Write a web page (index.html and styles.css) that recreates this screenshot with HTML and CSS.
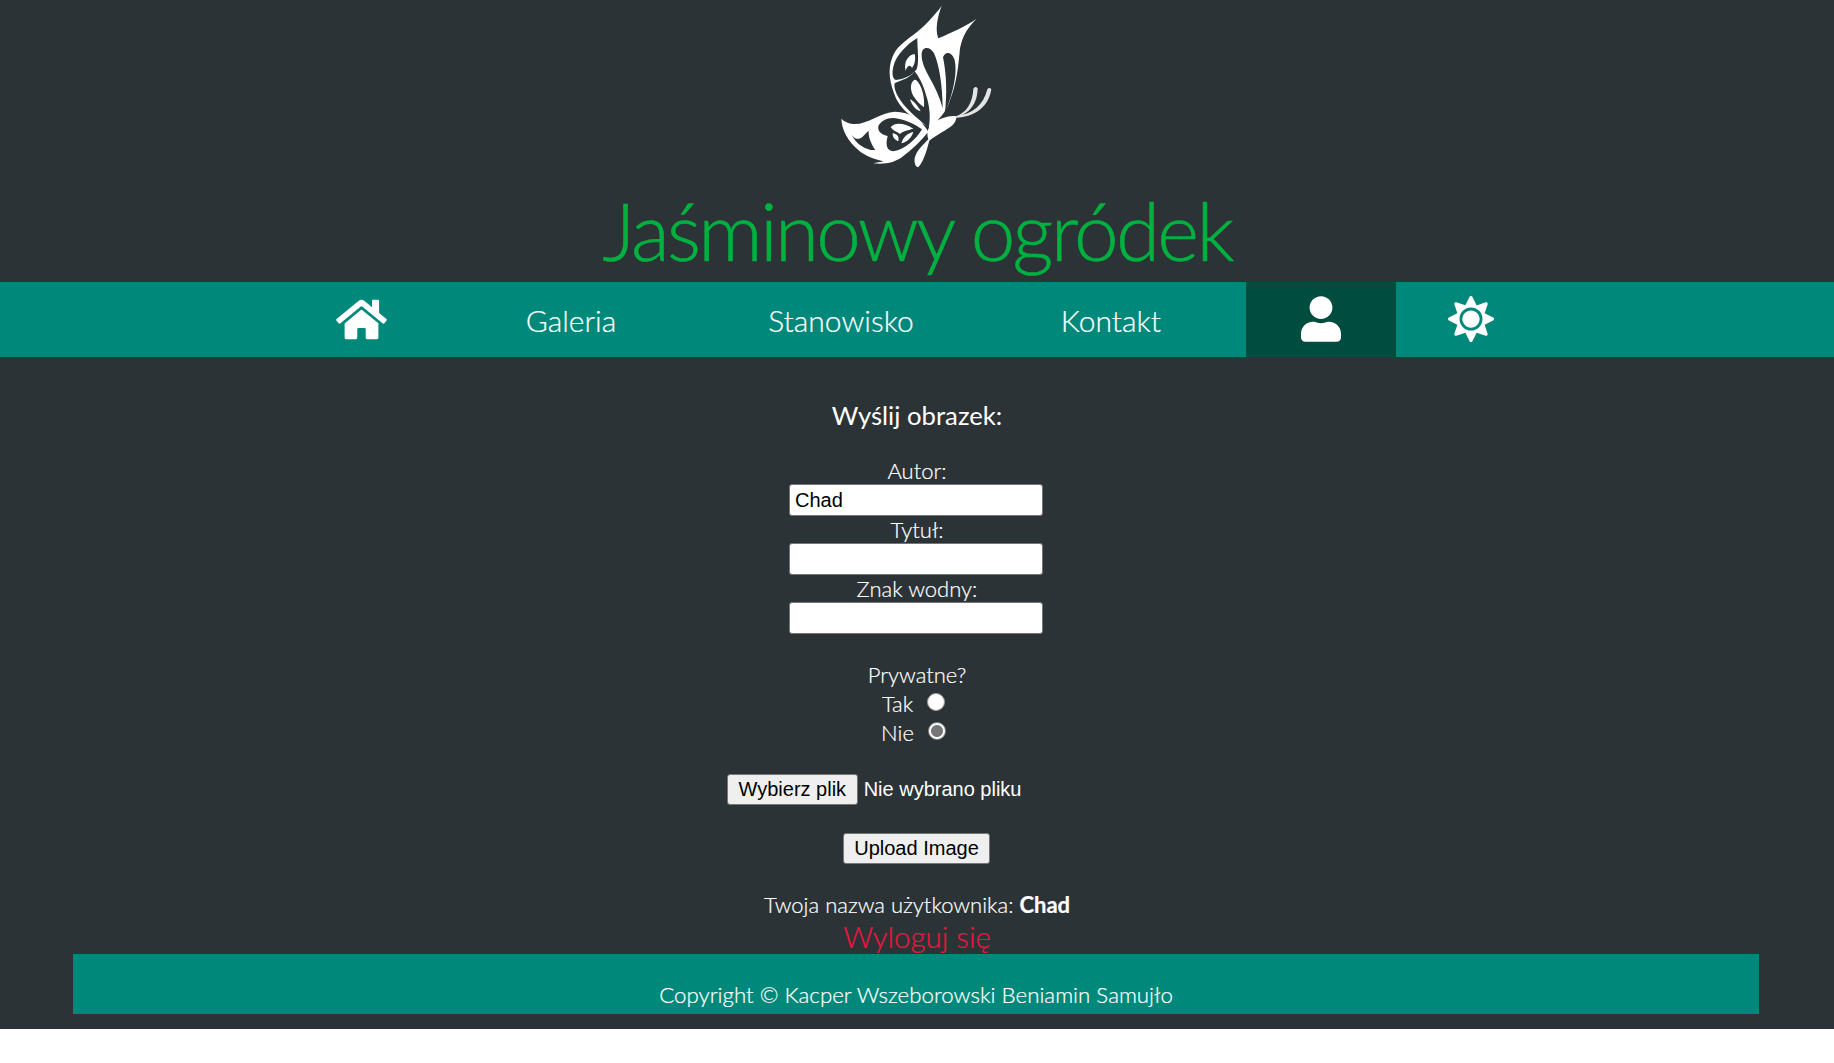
FILE: index.html
```html
<!DOCTYPE html>
<html lang="pl">
<head>
    <meta charset="UTF-8">
    <meta name="viewport" content="width=device-width, initial-scale=1.0">
    <title>Jaśminowy ogródek</title>
    <link rel="stylesheet" href="styles.css">
</head>
<body>
    <div class="page">
        <header class="top">
            <svg class="logo" viewBox="-9 0 720 540" aria-hidden="true">
                <path class="wing" d="M392 385C350 360 300 335 282 280C266 235 262 195 285 155C305 125 345 105 375 75C395 55 412 35 425 18C412 50 405 90 415 115C450 100 495 80 530 56C505 80 488 105 480 145C475 200 470 250 450 300C440 330 425 352 400 372Z"/>
                <path class="wing" d="M385 395C365 360 330 335 285 335C240 338 200 375 160 372C145 370 132 365 124 356C125 390 145 425 175 450C195 468 225 478 250 484C240 487 230 488 220 490C255 494 285 488 310 468C340 445 365 420 385 395Z"/>
                <path class="wing" d="M468 349C450 345 420 355 400 368C385 380 378 395 385 418C370 435 350 450 344 475C342 490 348 502 354 502C368 490 378 460 388 422C410 405 440 390 458 375C468 365 470 355 468 349Z"/>
                <path class="antenna" d="M468 349C498 338 518 310 520 266Q526 256 533 265C533 310 508 342 468 353Z"/>
                <path class="antenna" d="M468 349C520 342 550 315 562 268Q568 260 574 268C566 320 525 352 468 353Z"/>
                <path class="cell" d="M352 114C322 132 288 165 280 200C275 222 278 236 288 240C310 238 335 228 350 208C358 185 352 150 352 114Z"/>
                <path class="wing" d="M344 162C326 164 310 185 317 212C322 198 330 192 336 204C346 190 347 175 344 162Z"/>
                <path class="cell" d="M365 162C366 138 390 138 402 160C418 195 428 260 428 325C420 292 405 262 386 228C372 202 364 182 365 162Z"/>
                <path class="cell" d="M429 172C436 152 456 155 464 180C472 215 462 275 435 338C441 280 440 225 429 172Z"/>
                <path class="cell" d="M344 214C330 235 305 240 284 250C280 268 294 295 318 322C342 348 368 368 386 384C392 355 390 320 378 285C370 255 358 232 344 214Z"/>
                <path class="wing" d="M343 240C331 246 329 268 340 288C349 302 360 314 372 322C374 296 368 268 358 252C352 243 347 238 343 240Z"/>
                <path class="wing" d="M330 298C342 304 354 318 362 334C346 330 336 316 330 298Z"/>
                <path class="cell" d="M235 378C245 358 270 349 295 356C322 361 348 374 366 388C348 418 316 448 280 454C260 452 256 435 263 408C248 405 231 395 235 378Z"/>
                <path class="wing" d="M272 382C285 365 315 370 340 386C322 391 306 394 300 402C290 395 278 392 272 382Z"/>
                <path class="wing" d="M304 430C310 410 322 400 340 396C334 414 320 427 304 430Z"/>
                <path class="wing" d="M278 400C292 402 298 410 295 424C285 420 277 412 278 400Z"/>
                <path class="cell" d="M155 404C165 420 180 420 190 408C196 402 202 395 206 392C204 410 215 435 226 450C200 452 170 435 155 404Z"/>
            </svg>
            <h1 class="brand">Jaśminowy ogródek</h1>
        </header>

        <nav class="menu">
            <div class="menu-inner">
                <a class="menu-icon" href="#">
                    <svg class="ico-home" viewBox="0 0 576 512"><path d="M280.37 148.26L96 300.11V464a16 16 0 0 0 16 16l112.06-.29a16 16 0 0 0 15.92-16V368a16 16 0 0 1 16-16h64a16 16 0 0 1 16 16v95.64a16 16 0 0 0 16 16.05L464 480a16 16 0 0 0 16-16V300L295.67 148.26a12.19 12.19 0 0 0-15.3 0zM571.6 251.47L488 182.56V44.05a12 12 0 0 0-12-12h-56a12 12 0 0 0-12 12v72.61L318.47 43a48 48 0 0 0-61 0L4.34 251.47a12 12 0 0 0-1.6 16.9l25.5 31A12 12 0 0 0 45.15 301l235.22-193.74a12.19 12.19 0 0 1 15.3 0L530.9 301a12 12 0 0 0 16.9-1.6l25.5-31a12 12 0 0 0-1.7-16.93z"/></svg>
                </a>
                <a class="menu-link" href="#">Galeria</a>
                <a class="menu-link" href="#">Stanowisko</a>
                <a class="menu-link" href="#">Kontakt</a>
                <a class="menu-icon active" href="#">
                    <svg class="ico-user" viewBox="0 0 448 512"><path d="M224 256c70.7 0 128-57.3 128-128S294.7 0 224 0 96 57.3 96 128s57.3 128 128 128zm89.6 32h-16.7c-22.2 10.2-46.9 16-72.9 16s-50.6-5.8-72.9-16h-16.7C60.2 288 0 348.2 0 422.4V464c0 26.5 21.5 48 48 48h352c26.5 0 48-21.5 48-48v-41.6c0-74.2-60.2-134.4-134.4-134.4z"/></svg>
                </a>
                <a class="menu-icon" href="#">
                    <svg class="ico-sun" viewBox="0 0 512 512"><path d="M256 160c-52.9 0-96 43.1-96 96s43.1 96 96 96 96-43.1 96-96-43.1-96-96-96zm246.4 80.5l-94.7-47.3 33.5-100.4c4.5-13.6-8.4-26.5-21.9-21.9l-100.4 33.5-47.4-94.8c-6.4-12.8-24.6-12.8-31 0l-47.3 94.7L92.7 70.8c-13.6-4.5-26.5 8.4-21.9 21.9l33.5 100.4-94.7 47.4c-12.8 6.4-12.8 24.6 0 31l94.7 47.3-33.5 100.5c-4.5 13.6 8.4 26.5 21.9 21.9l100.4-33.5 47.3 94.7c6.4 12.8 24.6 12.8 31 0l47.3-94.7 100.4 33.5c13.6 4.5 26.5-8.4 21.9-21.9l-33.5-100.4 94.7-47.3c13-6.5 13-24.7.2-31.1zm-155.9 106c-49.9 49.9-131.1 49.9-181 0-49.9-49.9-49.9-131.1 0-181 49.9-49.9 131.1-49.9 181 0 49.9 49.9 49.9 131.1 0 181z"/></svg>
                </a>
            </div>
        </nav>

        <main class="content">
            <form class="upload">
                <h3 class="upload-title">Wyślij obrazek:</h3>
                <label class="field-label" for="author">Autor:</label>
                <input class="field" id="author" type="text" value="Chad">
                <label class="field-label" for="title">Tytuł:</label>
                <input class="field" id="title" type="text">
                <label class="field-label" for="mark">Znak wodny:</label>
                <input class="field" id="mark" type="text">

                <div class="private">
                    <div class="private-row">Prywatne?</div>
                    <label class="private-row">Tak <input class="radio" type="radio" name="private"></label>
                    <label class="private-row">Nie <input class="radio" type="radio" name="private" checked></label>
                </div>

                <div class="file-row">
                    <button class="btn" type="button">Wybierz plik</button>
                    <span class="file-name">Nie wybrano pliku</span>
                </div>
                <button class="btn btn-upload" type="button">Upload Image</button>
            </form>

            <p class="whoami">Twoja nazwa użytkownika: <strong>Chad</strong></p>
            <a class="logout" href="#">Wyloguj się</a>
        </main>

        <footer class="foot">Copyright © Kacper Wszeborowski Beniamin Samujło</footer>
    </div>
</body>
</html>
```

FILE: styles.css
```css
html, body {
    margin: 0;
    background-color: white;
}
body {
    font-family: Lato, "Open Sans", sans-serif;
    font-weight: 300;
    color: white;
}
.page {
    background-color: #2b3337;
    padding-bottom: 15px;
}

/* header */
.top {
    height: 282px;
    text-align: center;
}
.logo {
    display: block;
    width: 240px;
    height: 180px;
    margin: 0 auto;
}
.wing { fill: white; }
.cell { fill: #2b3337; }
.antenna { fill: #e4e4e4; }
.brand {
    margin: 0;
    font-size: 80px;
    font-weight: 300;
    letter-spacing: -2.7px;
    line-height: 100px;
    color: #00b140;
    -webkit-text-stroke: 0.6px #00b140;
}

/* nav */
.menu {
    height: 75px;
    background-color: #00897b;
}
.menu-inner {
    display: flex;
    justify-content: center;
    height: 100%;
    padding-right: 2px;
}
.menu-inner a {
    display: flex;
    align-items: center;
    justify-content: center;
    color: white;
    text-decoration: none;
}
.menu-link {
    width: 270px;
    font-size: 30px;
    -webkit-text-stroke: 0.2px white;
}
.menu-icon { width: 150px; }
.menu-icon svg {
    display: block;
    fill: white;
    margin-top: -2px;
}
.menu-icon.active { background-color: #004d40; }
.menu-icon .ico-home { width: 51px; height: 45px; margin-top: -1px; }
.ico-user { width: 40px; height: 46px; }
.ico-sun { width: 46px; height: 46px; }

/* form */
.content {
    text-align: center;
    font-size: 22px;
}
.upload {
    display: flex;
    flex-direction: column;
    align-items: center;
}
.upload-title {
    margin: 0;
    padding-top: 41px;
    height: 59px;
    line-height: 34px;
    font-size: 25.7px;
    font-weight: 400;
    box-sizing: content-box;
}
.field-label {
    display: block;
    line-height: 27px;
    -webkit-text-stroke: 0.2px white;
}
.field {
    box-sizing: border-box;
    width: 254px;
    height: 32px;
    margin: 0 2px 0 0;
    padding: 1px 5px;
    border: 1px solid #767676;
    border-radius: 3px;
    background: white;
    font-family: "Liberation Sans", Arial, sans-serif;
    font-size: 20px;
}
.private {
    margin-top: 26px;
    line-height: 29px;
    -webkit-text-stroke: 0.2px white;
}
.private-row { display: block; }
.radio {
    appearance: none;
    box-sizing: border-box;
    width: 18px;
    height: 18px;
    margin: 0 7px 0 8px;
    border: 1.5px solid #9a9a9a;
    border-radius: 50%;
    background: white;
    vertical-align: 1px;
}
.radio:checked {
    background: radial-gradient(circle, #767676 0 5.5px, white 6.5px);
    border-color: #8a8a8a;
}
.file-row {
    display: flex;
    align-items: center;
    width: 380px;
    margin-top: 27px;
}
.file-name {
    margin-left: 6px;
    font-family: "Liberation Sans", Arial, sans-serif;
    font-size: 20px;
    font-weight: 400;
}
.btn {
    box-sizing: border-box;
    height: 31px;
    padding: 0 10.5px;
    border: 1px solid #767676;
    border-radius: 3px;
    background-color: #efefef;
    color: black;
    font-family: "Liberation Sans", Arial, sans-serif;
    font-size: 20px;
}
.btn-upload {
    margin-top: 28px;
    margin-right: 1px;
}
.whoami {
    margin: 25px 0 0;
    line-height: 32px;
    -webkit-text-stroke: 0.2px white;
}
.whoami strong { font-weight: 700; }
.logout {
    display: block;
    height: 33px;
    line-height: 31px;
    font-size: 29.5px;
    color: #ed1540;
    text-decoration: none;
    -webkit-text-stroke: 0.2px #ed1540;
}

/* footer */
.foot {
    box-sizing: border-box;
    width: 1686px;
    height: 60px;
    margin: 0 0 0 73px;
    padding-top: 23px;
    background-color: #00897b;
    text-align: center;
    font-size: 22.3px;
    line-height: 35px;
    -webkit-text-stroke: 0.2px white;
}
```
